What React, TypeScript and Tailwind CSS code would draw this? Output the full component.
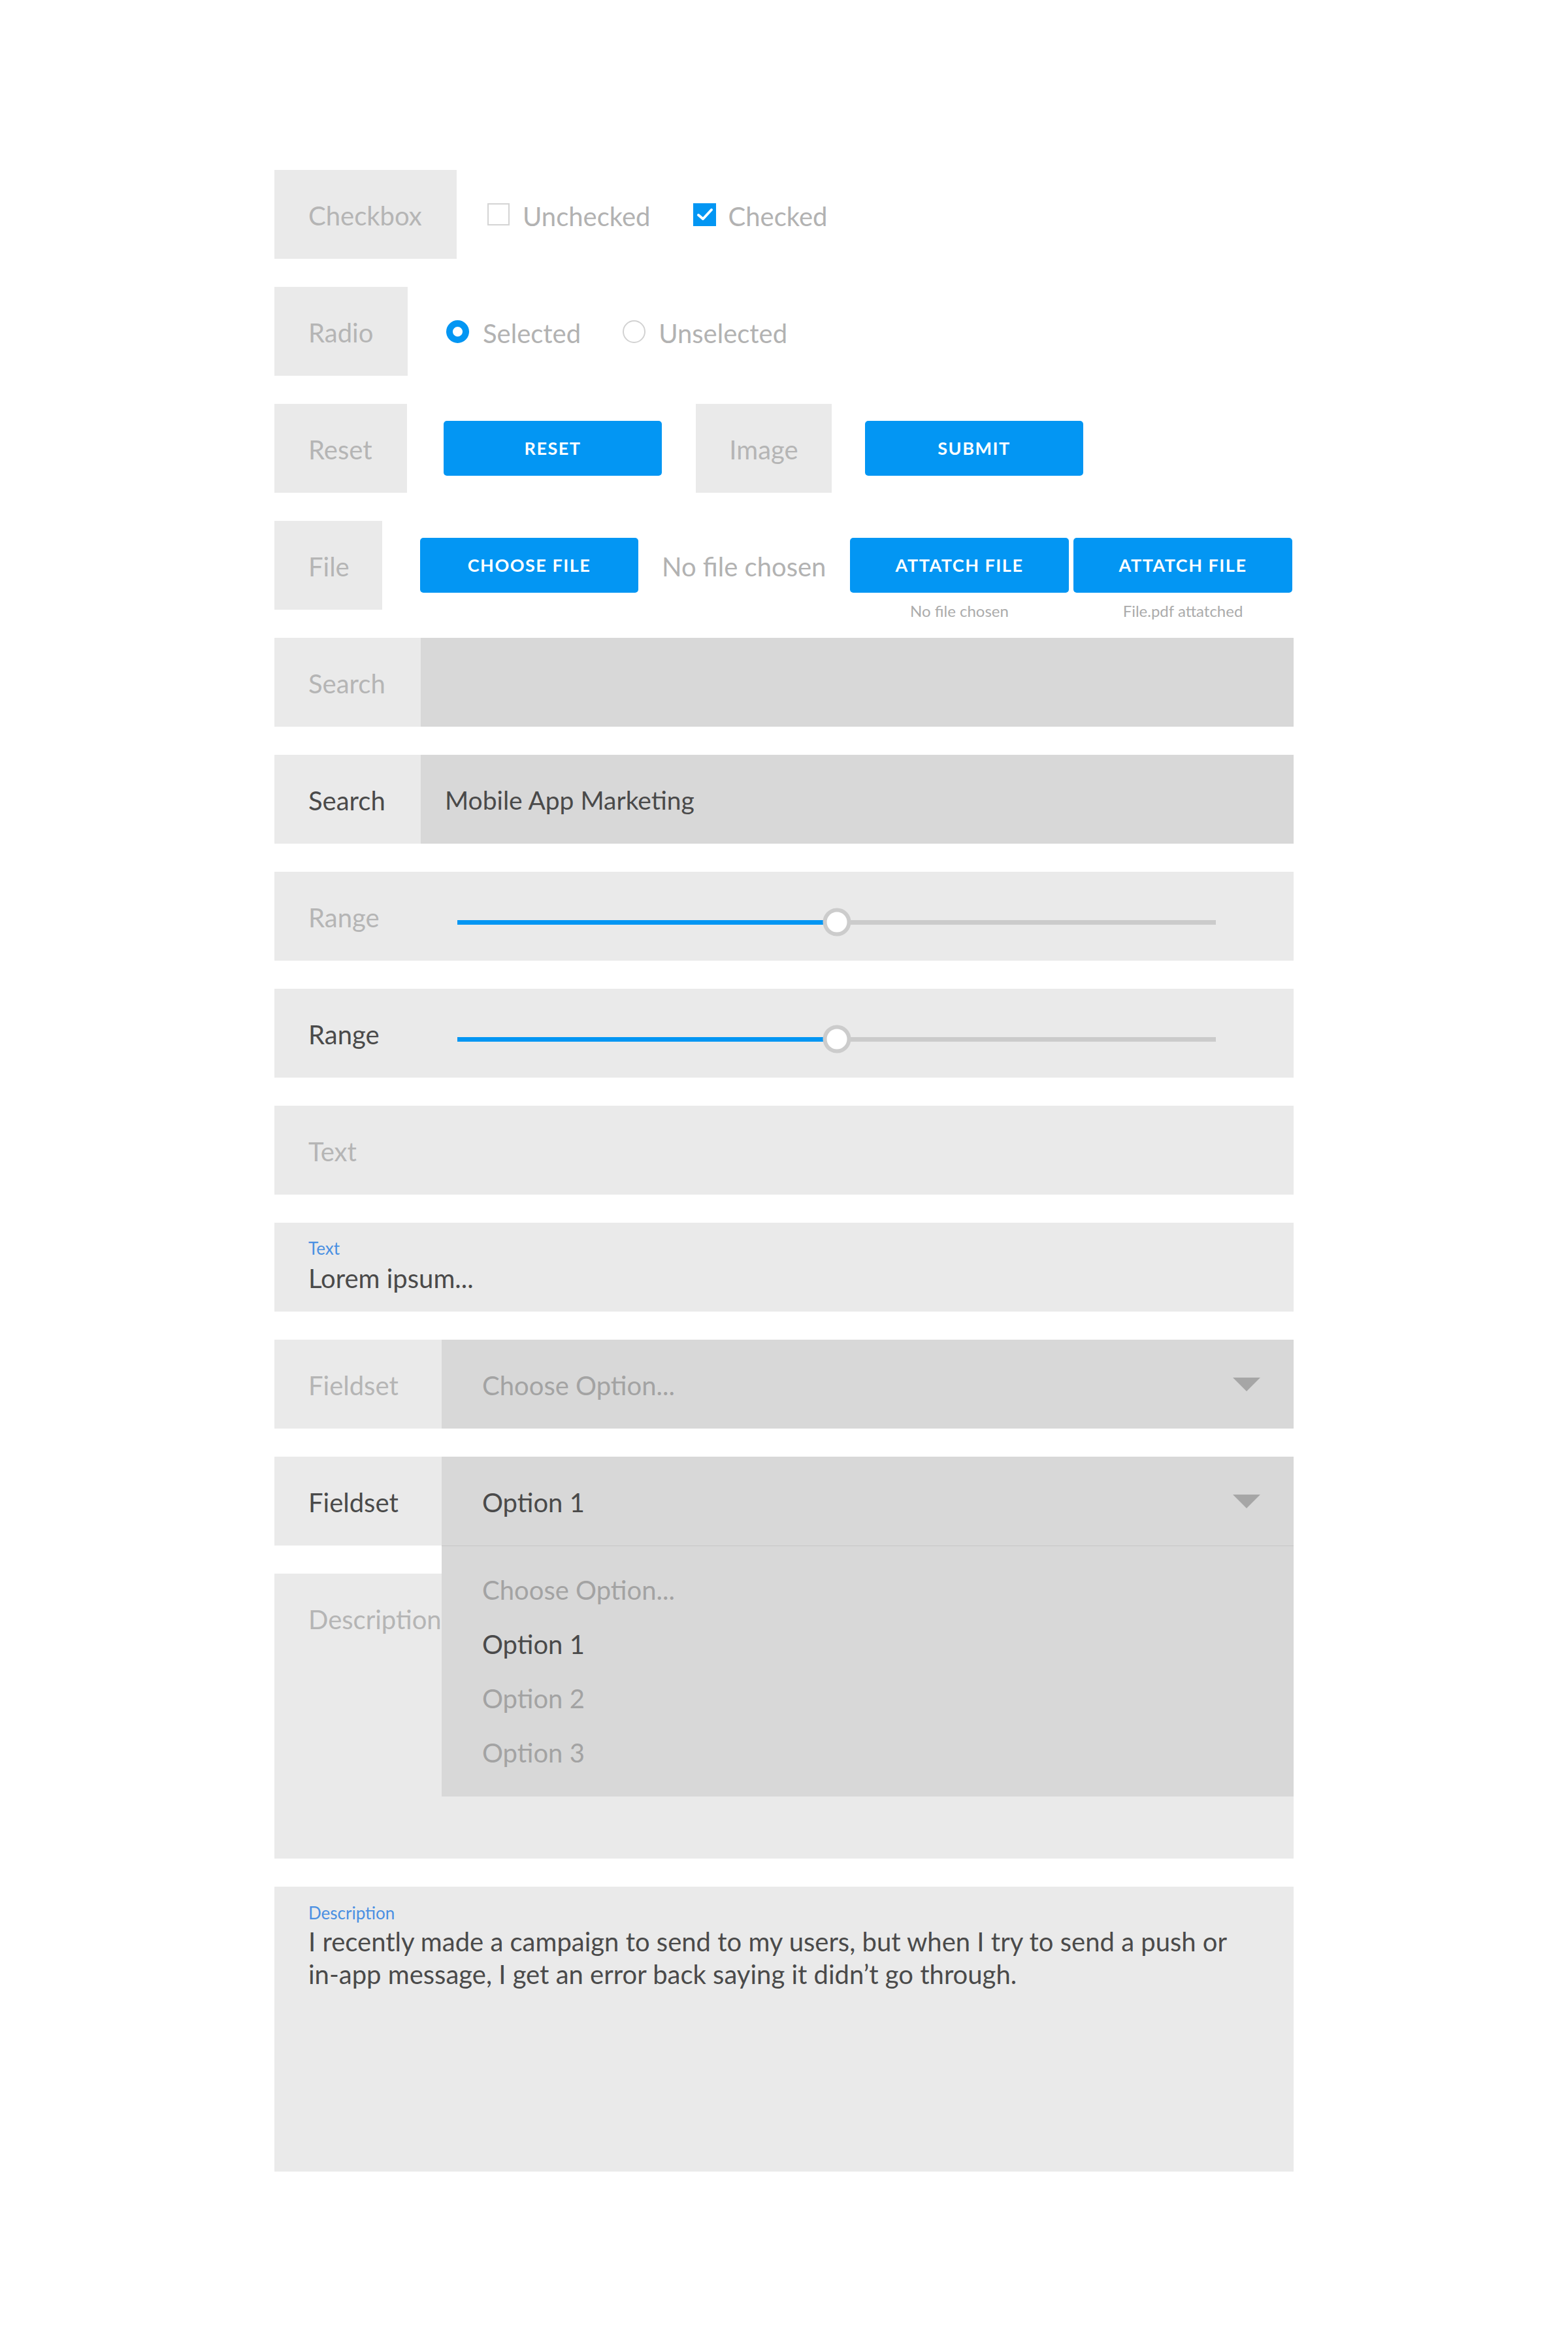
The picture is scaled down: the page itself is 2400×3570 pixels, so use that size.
import React from "react";

const Arrow = () => (
  <svg width="42" height="21" viewBox="0 0 42 21">
    <polygon points="0,0 42,0 21,21" fill="#a6a6a6" />
  </svg>
);

const BlueButton = ({ children, className = "" }: { children: React.ReactNode; className?: string }) => (
  <div
    className={
      "shrink-0 w-[334px] h-[84px] rounded-[5px] bg-[#0396f3] flex items-center justify-center whitespace-nowrap text-white text-[27px] font-bold tracking-[1.5px] " +
      className
    }
  >
    {children}
  </div>
);

export default function App() {
  return (
    <div className="min-h-[3570px] bg-white pt-[260px] pl-[420px] [font-family:Lato,sans-serif]">
      <div className="w-[1560px] flex flex-col gap-[43px]">
        {/* Checkbox */}
        <div className="h-[136px] flex items-center whitespace-nowrap">
          <div className="shrink-0 w-[279px] h-full bg-[#eaeaea] flex items-center pl-[52px] pt-[4px] text-[40px] text-[#b5b5b5]">Checkbox</div>
          <div className="shrink-0 ml-[47px] w-[34px] h-[34px] border-2 border-[#d4d4d4] bg-white" />
          <div className="ml-[20px] pt-[6px] text-[40px] text-[#b2b2b2]">Unchecked</div>
          <div className="shrink-0 ml-[66px] w-[35px] h-[35px] bg-[#0396f3] flex items-center justify-center">
            <svg width="26" height="22" viewBox="0 0 26 22">
              <polyline points="3,12 10,18 23,4" fill="none" stroke="white" strokeWidth="4" strokeLinecap="round" strokeLinejoin="round" />
            </svg>
          </div>
          <div className="ml-[18px] pt-[6px] text-[40px] text-[#b2b2b2]">Checked</div>
        </div>

        {/* Radio */}
        <div className="h-[136px] flex items-center whitespace-nowrap">
          <div className="shrink-0 w-[204px] h-full bg-[#eaeaea] flex items-center pl-[52px] pt-[4px] text-[40px] text-[#b5b5b5]">Radio</div>
          <div className="shrink-0 ml-[59px] w-[35px] h-[35px] rounded-full border-[10px] border-[#0396f3] bg-white" />
          <div className="ml-[21px] pt-[6px] text-[40px] text-[#b2b2b2]">Selected</div>
          <div className="shrink-0 ml-[64px] w-[35px] h-[35px] rounded-full border-2 border-[#d2d2d2] bg-white" />
          <div className="ml-[20px] pt-[6px] text-[40px] text-[#b2b2b2]">Unselected</div>
        </div>

        {/* Reset / Image */}
        <div className="h-[136px] flex items-center">
          <div className="shrink-0 w-[203px] h-full bg-[#eaeaea] flex items-center pl-[52px] pt-[4px] text-[40px] text-[#b5b5b5]">Reset</div>
          <BlueButton className="ml-[56px]">RESET</BlueButton>
          <div className="shrink-0 ml-[52px] w-[208px] h-full bg-[#eaeaea] flex items-center justify-center pt-[4px] text-[40px] text-[#b5b5b5]">Image</div>
          <BlueButton className="ml-[51px]">SUBMIT</BlueButton>
        </div>

        {/* File */}
        <div className="h-[136px] flex items-center">
          <div className="shrink-0 w-[165px] h-full bg-[#eaeaea] flex items-center pl-[52px] pt-[4px] text-[40px] text-[#b5b5b5]">File</div>
          <BlueButton className="ml-[58px]">CHOOSE FILE</BlueButton>
          <div className="shrink-0 ml-[36px] w-[243px] pt-[4px] whitespace-nowrap text-[40px] text-[#b2b2b2]">No file chosen</div>
          <div className="shrink-0 ml-[45px] flex gap-[7px]">
            <div className="relative">
              <BlueButton className="w-[335px]">ATTATCH FILE</BlueButton>
              <div className="absolute left-0 right-0 top-[98px] text-center whitespace-nowrap text-[24px] leading-[28px] text-[#ababab]">No file chosen</div>
            </div>
            <div className="relative">
              <BlueButton className="w-[335px]">ATTATCH FILE</BlueButton>
              <div className="absolute left-0 right-0 top-[98px] text-center whitespace-nowrap text-[24px] leading-[28px] text-[#ababab]">File.pdf attatched</div>
            </div>
          </div>
        </div>

        {/* Search empty */}
        <div className="h-[136px] flex">
          <div className="shrink-0 w-[224px] h-full bg-[#eaeaea] flex items-center pl-[52px] pt-[3px] text-[40px] text-[#b5b5b5]">Search</div>
          <div className="flex-1 h-full bg-[#d8d8d8]" />
        </div>

        {/* Search filled */}
        <div className="h-[136px] flex">
          <div className="shrink-0 w-[224px] h-full bg-[#eaeaea] flex items-center pl-[52px] pt-[3px] text-[40px] text-[#4a4a4a]">Search</div>
          <div className="flex-1 h-full bg-[#d8d8d8] flex items-center pl-[37px] pt-[3px] text-[39px] text-[#4a4a4a]">Mobile App Marketing</div>
        </div>

        {/* Range */}
        <div className="h-[136px] flex items-center bg-[#eaeaea]">
          <div className="shrink-0 w-[280px] pl-[52px] pt-[3px] text-[40px] text-[#b5b5b5]">Range</div>
          <div className="flex-1 mr-[119px] mt-[18px] relative h-[7px] bg-[#cbcbcb]">
            <div className="h-full w-1/2 bg-[#0396f3]" />
            <div className="absolute left-1/2 top-1/2 -translate-x-1/2 -translate-y-1/2 w-[43px] h-[43px] rounded-full border-[6px] border-[#cccccc] bg-white" />
          </div>
        </div>

        {/* Range filled */}
        <div className="h-[136px] flex items-center bg-[#eaeaea]">
          <div className="shrink-0 w-[280px] pl-[52px] pt-[3px] text-[40px] text-[#4a4a4a]">Range</div>
          <div className="flex-1 mr-[119px] mt-[18px] relative h-[7px] bg-[#cbcbcb]">
            <div className="h-full w-1/2 bg-[#0396f3]" />
            <div className="absolute left-1/2 top-1/2 -translate-x-1/2 -translate-y-1/2 w-[43px] h-[43px] rounded-full border-[6px] border-[#cccccc] bg-white" />
          </div>
        </div>

        {/* Text empty */}
        <div className="h-[136px] flex items-center bg-[#eaeaea] pl-[52px] pt-[3px] text-[40px] text-[#b5b5b5]">Text</div>

        {/* Text filled */}
        <div className="h-[136px] flex flex-col bg-[#eaeaea] pl-[52px] pt-[24px]">
          <div className="text-[26px] leading-[30px] text-[#4a90e2]">Text</div>
          <div className="mt-[7px] text-[40px] leading-[48px] text-[#4a4a4a]">Lorem ipsum...</div>
        </div>

        {/* Fieldset placeholder */}
        <div className="h-[136px] flex">
          <div className="shrink-0 w-[256px] h-full bg-[#eaeaea] flex items-center pl-[52px] pt-[3px] text-[40px] text-[#b5b5b5]">Fieldset</div>
          <div className="flex-1 h-full bg-[#d8d8d8] flex items-center justify-between pl-[62px] pr-[51px]">
            <span className="pt-[3px] text-[40px] text-[#a3a3a3]">Choose Option...</span>
            <Arrow />
          </div>
        </div>

        {/* Fieldset open */}
        <div className="h-[136px] flex relative z-10">
          <div className="shrink-0 w-[256px] h-full bg-[#eaeaea] flex items-center pl-[52px] pt-[3px] text-[40px] text-[#4a4a4a]">Fieldset</div>
          <div className="flex-1 h-full bg-[#d8d8d8] flex items-center justify-between pl-[62px] pr-[51px]">
            <span className="pt-[3px] text-[40px] text-[#4a4a4a]">Option 1</span>
            <Arrow />
          </div>
          <div className="absolute top-full left-[256px] right-0 bg-[#d8d8d8] border-t border-[#c6c6c6] pt-[25px] pb-[26px]">
            <div className="h-[83px] flex items-center pl-[62px] text-[40px] text-[#a3a3a3]">Choose Option...</div>
            <div className="h-[83px] flex items-center pl-[62px] text-[40px] text-[#4a4a4a]">Option 1</div>
            <div className="h-[83px] flex items-center pl-[62px] text-[40px] text-[#a3a3a3]">Option 2</div>
            <div className="h-[83px] flex items-center pl-[62px] text-[40px] text-[#a3a3a3]">Option 3</div>
          </div>
        </div>

        {/* Description empty */}
        <div className="h-[436px] bg-[#eaeaea]">
          <div className="h-[136px] flex items-center pl-[52px] pt-[3px] text-[40px] text-[#b5b5b5]">Description</div>
        </div>

        {/* Description filled */}
        <div className="h-[436px] bg-[#eaeaea] pl-[52px] pt-[25px]">
          <div className="text-[26px] leading-[30px] text-[#4a90e2]">Description</div>
          <p className="mt-[4px] text-[40px] leading-[50px] text-[#4a4a4a]">
            I recently made a campaign to send to my users, but when I try to send a push or
            <br />
            in-app message, I get an error back saying it didn’t go through.
          </p>
        </div>
      </div>
    </div>
  );
}
